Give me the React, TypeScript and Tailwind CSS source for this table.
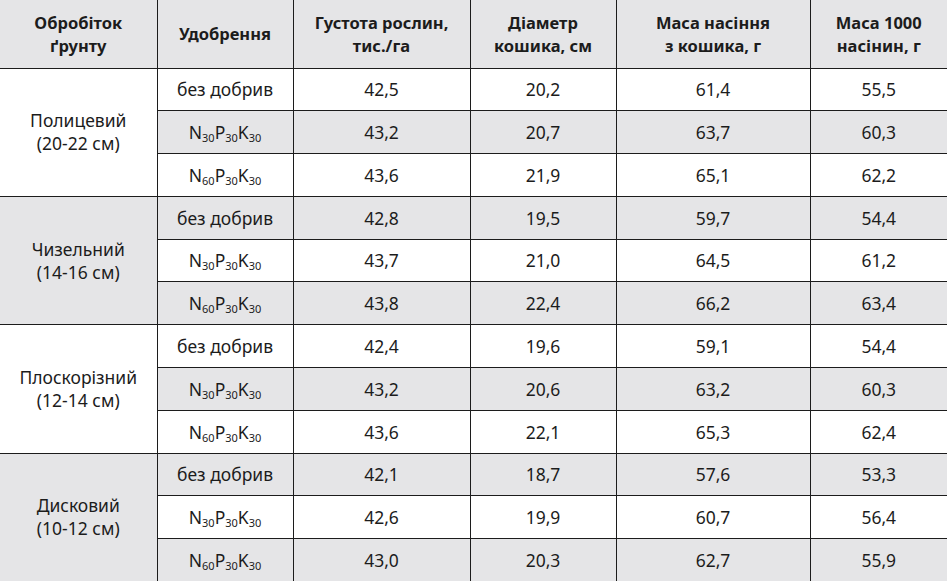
const groups = [
  {
    name: "Полицевий",
    depth: "(20-22 см)",
    rows: [
      ["42,5", "20,2", "61,4", "55,5"],
      ["43,2", "20,7", "63,7", "60,3"],
      ["43,6", "21,9", "65,1", "62,2"],
    ],
  },
  {
    name: "Чизельний",
    depth: "(14-16 см)",
    rows: [
      ["42,8", "19,5", "59,7", "54,4"],
      ["43,7", "21,0", "64,5", "61,2"],
      ["43,8", "22,4", "66,2", "63,4"],
    ],
  },
  {
    name: "Плоскорізний",
    depth: "(12-14 см)",
    rows: [
      ["42,4", "19,6", "59,1", "54,4"],
      ["43,2", "20,6", "63,2", "60,3"],
      ["43,6", "22,1", "65,3", "62,4"],
    ],
  },
  {
    name: "Дисковий",
    depth: "(10-12 см)",
    rows: [
      ["42,1", "18,7", "57,6", "53,3"],
      ["42,6", "19,9", "60,7", "56,4"],
      ["43,0", "20,3", "62,7", "55,9"],
    ],
  },
];

function Npk({ n }: { n: string }) {
  return (
    <span>
      N<sub className="text-[11px] relative top-[3px] align-baseline">{n}</sub>P
      <sub className="text-[11px] relative top-[3px] align-baseline">30</sub>K
      <sub className="text-[11px] relative top-[3px] align-baseline">30</sub>
    </span>
  );
}

const fert = [<span>без добрив</span>, <Npk n="30" />, <Npk n="60" />];

const grey = "bg-[#e5e5e7]";
const cell = "border-r border-b border-[#1c1c1c] text-center align-middle";

export default function App() {
  return (
    <div className="w-[947px] h-[581px] overflow-hidden bg-white text-[#1c1c1c] font-['Noto_Sans',sans-serif] text-[17.5px]">
      <table className="w-[947px] table-fixed border-collapse">
        <colgroup>
          <col className="w-[157px]" />
          <col className="w-[136px]" />
          <col className="w-[177px]" />
          <col className="w-[146px]" />
          <col className="w-[194px]" />
          <col className="w-[137px]" />
        </colgroup>
        <thead>
          <tr className={`h-[68px] ${grey} font-bold text-[16.5px] leading-[23px]`}>
            <th className={cell}>Обробіток<br />ґрунту</th>
            <th className={cell}>Удобрення</th>
            <th className={cell}>Густота рослин,<br />тис./га</th>
            <th className={cell}>Діаметр<br />кошика, см</th>
            <th className={cell}>Маса насіння<br />з кошика, г</th>
            <th className={`${cell} border-r-0`}>Маса 1000<br />насінин, г</th>
          </tr>
        </thead>
        <tbody>
          {groups.map((g, gi) =>
            g.rows.map((r, ri) => {
              const idx = gi * 3 + ri;
              const bg = idx % 2 === 1 ? grey : "bg-white";
              return (
                <tr key={idx} className={`h-[42.8px] ${bg}`}>
                  {ri === 0 && (
                    <td rowSpan={3} className={`${cell} leading-[23px] ${gi % 2 === 1 ? grey : "bg-white"}`}>
                      {g.name}
                      <br />
                      {g.depth}
                    </td>
                  )}
                  <td className={cell}>{fert[ri]}</td>
                  {r.map((v, vi) => (
                    <td key={vi} className={`${cell} ${vi === 3 ? "border-r-0" : ""}`}>
                      {v}
                    </td>
                  ))}
                </tr>
              );
            })
          )}
        </tbody>
      </table>
    </div>
  );
}
